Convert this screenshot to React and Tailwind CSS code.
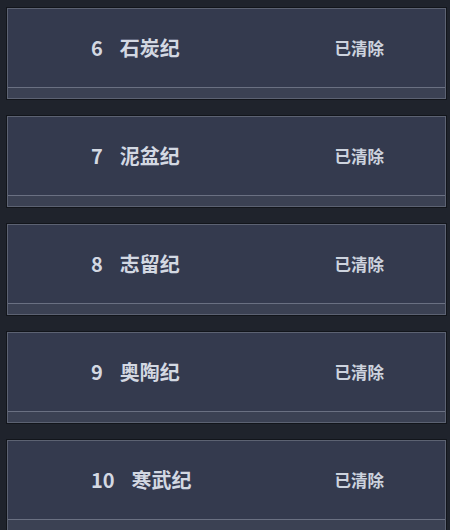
const ERAS = [
  { no: 6, name: '石炭纪' },
  { no: 7, name: '泥盆纪' },
  { no: 8, name: '志留纪' },
  { no: 9, name: '奥陶纪' },
  { no: 10, name: '寒武纪' },
]

function EraCard({ no, name }) {
  return (
    <div className="border border-[#12151b] bg-[#12151b]">
      <div className="border border-[#5c6272] bg-[#343a4e]">
        {/* main row */}
        <div className="h-[78px] flex items-center gap-[17px] pl-[83px] pr-[61px]">
          <span className="text-[20px] font-bold text-[#d3d8e2]">{no}</span>
          <span className="text-[20px] font-bold text-[#d3d8e2]">{name}</span>
          <span className="ml-auto text-[16.5px] font-bold text-[#cdd3de]">已清除</span>
        </div>
        {/* bottom strip */}
        <div className="h-[11px] border-t border-[#6a7082] bg-[#3b4153]" />
      </div>
    </div>
  )
}

export default function App() {
  return (
    <div
      className="w-[450px] h-[530px] overflow-hidden bg-[#1f232c] pt-[7px] pl-[6px] pr-[3px] flex flex-col gap-[15px]"
      style={{ fontFamily: "'Noto Sans CJK SC', 'Noto Sans', sans-serif" }}
    >
      {ERAS.map((e) => (
        <EraCard key={e.no} {...e} />
      ))}
    </div>
  )
}
